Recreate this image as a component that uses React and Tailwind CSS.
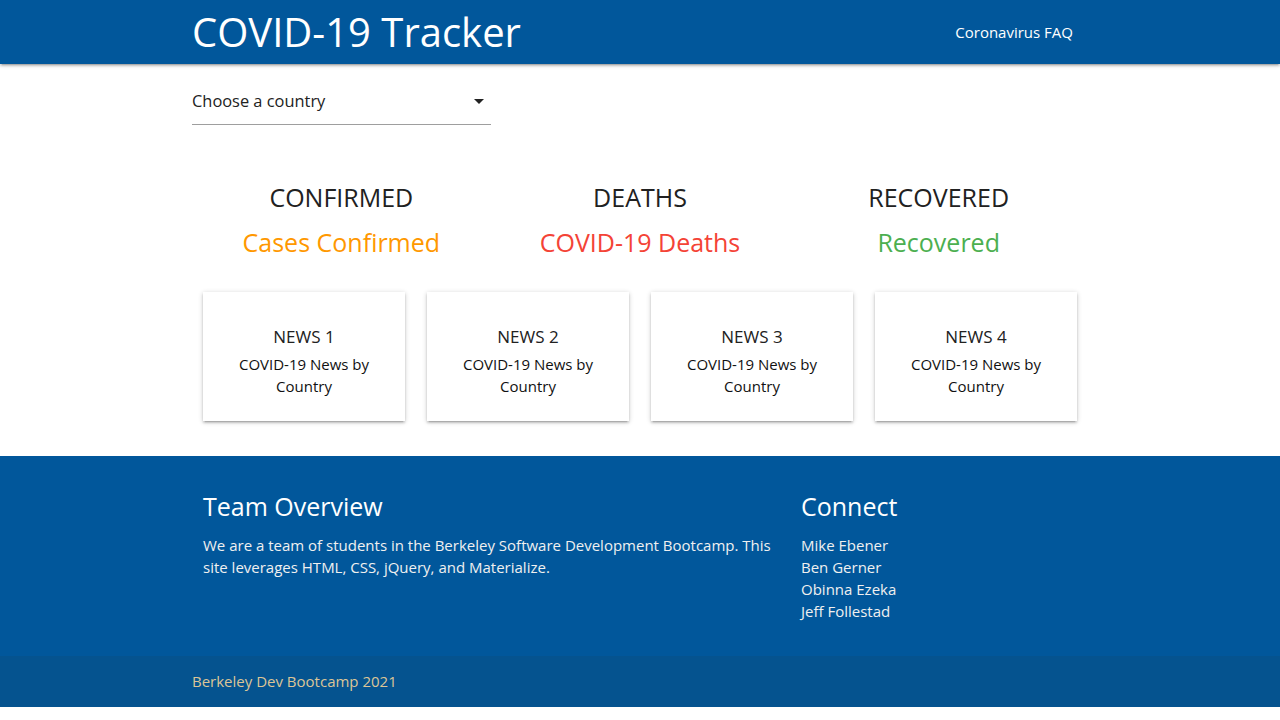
import React from "react";

const font = { fontFamily: '"Open Sans", "Noto Sans", sans-serif' };

const stats = [
  { label: "CONFIRMED", value: "Cases Confirmed", color: "text-[#ff9800]" },
  { label: "DEATHS", value: "COVID-19 Deaths", color: "text-[#f44336]" },
  { label: "RECOVERED", value: "Recovered", color: "text-[#4caf50]" },
];

const team = ["Mike Ebener", "Ben Gerner", "Obinna Ezeka", "Jeff Follestad"];

function NewsCard({ n }) {
  return (
    <div className="w-[202px] h-[129px] bg-white text-center px-6 pt-[33px] shadow-[0_2px_2px_0_rgba(0,0,0,0.14),0_3px_1px_-2px_rgba(0,0,0,0.12),0_1px_5px_0_rgba(0,0,0,0.2)]">
      <div className="text-[17px] leading-[24px] text-[#212121]">NEWS {n}</div>
      <div className="mt-[4px] text-[15px] leading-[22px] text-[#111]">COVID-19 News by Country</div>
    </div>
  );
}

export default function App() {
  return (
    <div style={font} className="bg-white">
      <nav className="h-16 bg-[#01579b] relative z-10 shadow-[0_2px_2px_0_rgba(0,0,0,0.14),0_3px_1px_-2px_rgba(0,0,0,0.12),0_1px_5px_0_rgba(0,0,0,0.2)]">
        <div className="w-[896px] mx-auto h-16 flex items-center justify-between text-white">
          <a className="text-[40px] leading-[64px] whitespace-nowrap">COVID-19 Tracker</a>
          <a className="text-[15px] pr-[15px]">Coronavirus FAQ</a>
        </div>
      </nav>

      <main className="w-[896px] mx-auto">
        <div className="mt-[15px] w-[299px] h-[46px] border-b border-[#9e9e9e] flex items-center justify-between">
          <span className="text-[16.4px] text-[#222]">Choose a country</span>
          <span className="mr-[7px] w-0 h-0 border-l-[5px] border-r-[5px] border-t-[5px] border-l-transparent border-r-transparent border-t-[#222]" />
        </div>

        <div className="mt-[56px] grid grid-cols-3">
          {stats.map((s) => (
            <div key={s.label} className="text-center">
              <div className="text-[25px] leading-[32px] text-[#212121]">{s.label}</div>
              <div className={`mt-[13px] text-[25px] leading-[32px] ${s.color}`}>{s.value}</div>
            </div>
          ))}
        </div>

        <div className="mt-[34px] flex justify-center gap-[22px]">
          {[1, 2, 3, 4].map((n) => (
            <NewsCard key={n} n={n} />
          ))}
        </div>
      </main>

      <footer className="mt-[35px] bg-[#01579b] text-white">
        <div className="h-[200px] w-[896px] mx-auto px-[11px] pt-[34px] flex">
          <div className="w-[598px] pr-[24px]">
            <h5 className="text-[25px] leading-[32px]">Team Overview</h5>
            <p className="mt-[12px] text-[15px] leading-[22px] text-[#f0f0f0]">
              We are a team of students in the Berkeley Software Development Bootcamp. This site leverages HTML, CSS, jQuery, and Materialize.
            </p>
          </div>
          <div>
            <h5 className="text-[25px] leading-[32px]">Connect</h5>
            <ul className="mt-[12px] text-[15px] leading-[22px] text-[#f0f0f0]">
              {team.map((t) => (
                <li key={t}>{t}</li>
              ))}
            </ul>
          </div>
        </div>
        <div className="h-[51px] bg-[#05538f]">
          <div className="w-[896px] mx-auto h-[51px] flex items-center text-[15px] text-[#dcc597]">
            Berkeley Dev Bootcamp 2021
          </div>
        </div>
      </footer>
    </div>
  );
}
